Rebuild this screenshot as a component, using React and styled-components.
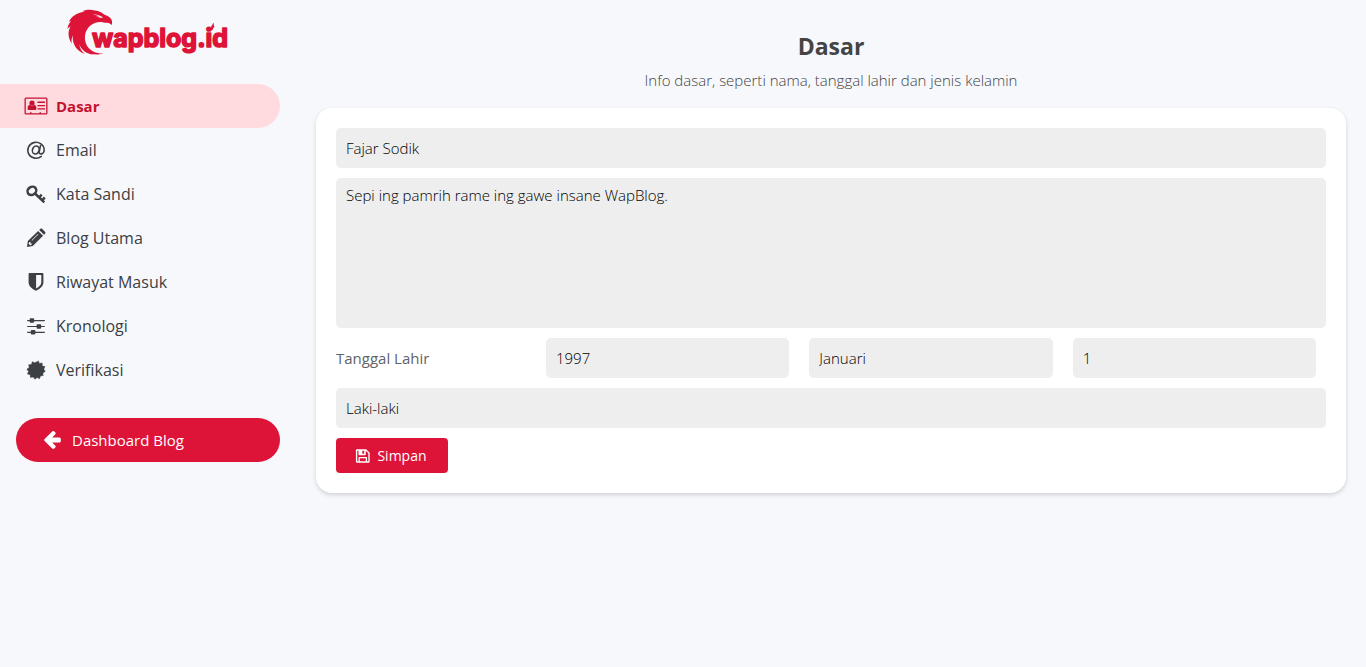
import React from "react";
import styled, { createGlobalStyle } from "styled-components";

const GlobalStyle = createGlobalStyle`
  *, *::before, *::after { box-sizing: border-box; }
  body {
    margin: 0;
    background: #f7f8fc;
    color: #3c4043;
    font-family: "Open Sans", "Noto Sans", sans-serif;
    font-size: 15px;
    line-height: 20px;
  }
`;

const Page = styled.div`
  display: flex;
  align-items: flex-start;
  min-height: 100vh;
`;

const Sidebar = styled.aside`
  flex: none;
  width: 296px;
  padding-right: 16px;
`;

const LogoLink = styled.a`
  display: flex;
  justify-content: center;
  height: 64px;
  margin-bottom: 20px;
  padding-left: 16px;

  text {
    font-family: Inter, sans-serif;
    font-size: 25px;
    font-weight: 700;
  }
`;

const Nav = styled.nav`
  display: flex;
  flex-direction: column;
`;

const NavLink = styled.a`
  display: flex;
  align-items: center;
  gap: 8px;
  height: 44px;
  padding-left: 24px;
  border-radius: 0 22px 22px 0;
  color: ${(p) => (p.$active ? "#c4122f" : "#3c4043")};
  background: ${(p) => (p.$active ? "#ffdbe0" : "transparent")};
  font-size: ${(p) => (p.$active ? 15 : 16)}px;
  font-weight: ${(p) => (p.$active ? 700 : 400)};
  text-decoration: none;
`;

const BackLink = styled(NavLink)`
  margin: 26px 0 0 16px;
  border-radius: 22px;
  background: #de1338;
  color: #fff;
  font-size: 15px;
`;

const Glyph = styled.svg`
  flex: none;
  width: ${(p) => p.$size || 24}px;
  height: ${(p) => p.$size || 24}px;
  fill: currentColor;
`;

const Main = styled.main`
  flex: 1;
  min-width: 0;
  padding: 32px 20px 20px;
`;

const Heading = styled.h1`
  margin: 0;
  color: #444;
  font-size: 23px;
  font-weight: 700;
  line-height: 28px;
  text-align: center;
`;

const Intro = styled.p`
  margin: 10px 0 18px;
  color: #444;
  font-size: 15px;
  font-weight: 300;
  text-align: center;
`;

const Card = styled.form`
  display: flex;
  flex-direction: column;
  align-items: stretch;
  gap: 10px;
  padding: 20px;
  border-radius: 16px;
  background: #fff;
  box-shadow: 0 2px 4px rgba(60, 64, 67, 0.2);
`;

const Field = styled.input`
  display: block;
  width: 100%;
  height: 40px;
  margin: 0;
  padding: 0 10px;
  border: 0;
  border-radius: 5px;
  outline: 0;
  appearance: none;
  background: #eee;
  color: #000;
  font-family: inherit;
  font-size: 15px;
  font-weight: 300;
`;

const Bio = styled(Field)`
  height: 150px;
  padding: 7px 10px;
  line-height: 20px;
  resize: none;
`;

const BirthRow = styled.div`
  display: grid;
  grid-template-columns: 190px 1fr 1fr 1fr;
  align-items: center;
  gap: 20px;
  padding-right: 10px;
`;

const Label = styled.label`
  color: #5f6368;
`;

const SaveButton = styled.button`
  display: flex;
  align-items: center;
  justify-content: center;
  gap: 4px;
  align-self: flex-start;
  width: 112px;
  height: 35px;
  padding: 0 4px 0 0;
  border: 0;
  border-radius: 4px;
  background: #de1338;
  color: #fff;
  font-family: inherit;
  font-size: 14px;
  line-height: 20px;
`;

const shapes = {
  card: (
    <>
      <path fillRule="evenodd" d="M2 3.500h20a1.500 1.500 0 0 1 1.500 1.500v14a1.500 1.500 0 0 1-1.500 1.500H2A1.500 1.500 0 0 1 .5 19V5A1.500 1.500 0 0 1 2 3.500zM1.800 4.800v14.400h4.200v-.9h1.500v.9h8v-.9H17v.9h5.200V4.800z" />
      <circle cx="8" cy="9" r="2.600" />
      <path d="M5.700 10.800c-1.500.2-2.100 1.800-2.100 3.700 0 1 .7 1.600 1.500 1.600h5.800c.9 0 1.500-.6 1.500-1.600 0-1.900-.6-3.500-2.100-3.700-1.300 1.200-3.300 1.200-4.600 0z" />
      <path d="M13.500 7.600H21V9h-7.500zM13.500 10.900H21v1.400h-7.500zM13.500 14.200H21v1.400h-7.500z" />
    </>
  ),
  at: (
    <g fill="none" stroke="currentColor" strokeWidth="1.600" strokeLinecap="round">
      <path d="M17.300 18.400A8.200 8 0 1 1 20.200 11.500c0 2.600-1.500 4.400-3.200 4.400-1.400 0-2-.9-1.700-2.400l1.100-5.600" />
      <ellipse cx="11.800" cy="12" rx="3.300" ry="4.100" transform="rotate(20 11.800 12)" />
    </g>
  ),
  key: (
    <g fill="none" stroke="currentColor">
      <ellipse cx="7.900" cy="8.800" rx="4.600" ry="3.900" strokeWidth="2.500" transform="rotate(-35 7.900 8.800)" />
      <path d="M11 11.500l9.300 8.800M15.200 15.300l2.500-2.600M18 18.300l2.800-2.800" strokeWidth="2.500" />
    </g>
  ),
  pencil: (
    <path fillRule="evenodd" d="M3.800 15 14.100 4.900l5 4.900-10.300 10.300-5.800.9zM15.200 3.900l1-.9c.6-.6 1.500-.6 2.100 0l2.700 2.700c.6.6.6 1.400 0 2l-1 1.100zM5.200 16.100l-.6 1.600 1.500 1.500 1.700-.6v-1.200H6.500v-1.300zM7.600 14.300l6.300-6.300.4.400-6.300 6.300z" />
  ),
  shield: (
    <path fillRule="evenodd" d="M5.700 3h12.600c.7 0 1.100.5 1.100 1.100v8.200c0 4-3.400 6.700-7.400 8.500-4-1.800-7.400-4.500-7.400-8.500V4.100C4.600 3.500 5 3 5.700 3zM12.100 5v13.400c2.800-1.600 5.200-3.400 5.200-6.200V5z" />
  ),
  sliders: (
    <path d="M3.200 6h2.500V5.200c0-.5.400-.9.900-.9h2.700c.5 0 .9.400.9.900V6h10.600v1.200H10.200v.6c0 .5-.4.900-.9.900H6.600a.9.900 0 0 1-.9-.9v-.6H3.200zM3.200 11.900h9.400v-.8c0-.5.400-.9.900-.9h2.800c.5 0 .9.400.9.900v.8h3.600v1.200h-3.600v.7c0 .5-.4.900-.9.900h-2.800a.9.900 0 0 1-.9-.9v-.7H3.200zM3.200 17.700h3.600v-.8c0-.5.400-.9.900-.9h2.800c.5 0 .9.400.9.900v.8h9.400v1.200h-9.400v.7c0 .5-.4.900-.9.900H7.700a.9.900 0 0 1-.9-.9v-.7H3.200z" />
  ),
  badge: (
    <path d="M12 4.300 14.400 2.900 15.400 5.400 18.200 5 18.200 7.900 21 8.600 19.800 11.100 21.200 13.400 18.800 14.900 19.200 17.600 16.400 17.900 15.600 20.700 13.100 19.500 10.900 21.200 9.300 19 6.500 19.400 6.200 16.700 3.400 15.900 4.600 13.400 2.900 11.200 5.200 9.500 4.700 6.700 7.500 6.500 8.200 3.700 10.600 4.800z" strokeLinejoin="round" stroke="currentColor" strokeWidth=".5" />
  ),
  arrow: (
    <path d="M20.800 11v2c0 .8-.5 1.500-1.400 1.500h-7.200l3 3c.7.700.7 1.500 0 2.100l-.9.900c-.6.600-1.500.6-2.100 0l-7.600-7.500c-.6-.6-.6-1.500 0-2.100l7.600-7.500c.6-.6 1.500-.6 2.100 0l.9.900c.6.600.6 1.500 0 2.100l-3 3h7.200c.9 0 1.400.8 1.400 1.600z" />
  ),
  save: (
    <path fillRule="evenodd" d="M4.500 4h11.300l4.200 4.200v10.800c0 .6-.4 1-1 1H4.500c-.6 0-1-.4-1-1V5c0-.6.400-1 1-1zM5.100 5.600v12.800h1.500v-4.300c0-.5.400-.9.900-.9h8.500c.5 0 .9.400.9.900v4.300h1.500V8.800L15.300 5.600v4.500c0 .5-.4.900-.9.900H7.500a.9.900 0 0 1-.9-.9V5.600zM8.200 14.800v3.600h7.100v-3.600zM11.200 5.600v3.700h2.200V5.600z" />
  ),
};

function Icon({ name, size }) {
  return (
    <Glyph $size={size} viewBox="0 0 24 24" aria-hidden="true">
      {shapes[name]}
    </Glyph>
  );
}

function Logo() {
  return (
    <svg width="164" height="64" viewBox="0 0 164 64" fill="#de1338" role="img" aria-label="wapblog.id">
      <path d="M3 21.500C5.500 16.500 10.500 13 18.500 11.800C17.500 11.200 16.500 11.200 15.500 11.400C19 9.600 25 9.400 29 10.500C33 11 36 12.500 38 14.500C43 16 47.500 19 45.800 25C44 23 42 22.600 39 22.700C31 20 22 24.500 19.500 33C17 42 22 51 31.500 53C33.500 53.500 35.500 53.500 37.500 53C34 54.800 29.500 54.800 25.500 53.800C26.500 54.400 27.500 54.800 29 55C20.500 54 15 50 13.200 44C13.800 48.500 16 52 19 54C10.500 51 5.800 43.500 6.800 35.500C5.500 38 5.300 41 5.800 43.500C2 38 1.500 31.500 4.500 26.500C3.300 27 2.200 28 1.500 29C1.800 25.500 3 23.500 5 21C4.500 21 3.800 21.200 3 21.500Z" />
      <path d="M26.500 14.200c3.500 0 7.500 1 10.700 3.300-3 .5-5.200.2-7-1.500 1.800.6 2.800.7 3.800.5-2.500-1.200-5-1.800-7.500-2.300z" fill="#f7f8fc" />
      <text x="26" y="47" stroke="#de1338" strokeWidth="1.500" strokeLinejoin="round">wapblog.id</text>
      <path d="M142 30c2-1 4-2 3-4 3-1 0-2 3-3-1 3 2 4-1 5 1 2-2 3-5 2z" />
    </svg>
  );
}

const links = [
  ["card", "Dasar"],
  ["at", "Email"],
  ["key", "Kata Sandi"],
  ["pencil", "Blog Utama"],
  ["shield", "Riwayat Masuk"],
  ["sliders", "Kronologi"],
  ["badge", "Verifikasi"],
];

export default function App() {
  return (
    <>
      <GlobalStyle />
      <Page>
        <Sidebar>
          <LogoLink href="#"><Logo /></LogoLink>
          <Nav>
            {links.map(([icon, label], i) => (
              <NavLink key={label} href="#" $active={i === 0}>
                <Icon name={icon} />
                {label}
              </NavLink>
            ))}
            <BackLink href="#">
              <Icon name="arrow" />
              Dashboard Blog
            </BackLink>
          </Nav>
        </Sidebar>
        <Main>
          <Heading>Dasar</Heading>
          <Intro>Info dasar, seperti nama, tanggal lahir dan jenis kelamin</Intro>
          <Card onSubmit={(e) => e.preventDefault()}>
            <Field type="text" aria-label="Nama" defaultValue="Fajar Sodik" />
            <Bio as="textarea" aria-label="Bio" defaultValue="Sepi ing pamrih rame ing gawe insane WapBlog." />
            <BirthRow>
              <Label htmlFor="year">Tanggal Lahir</Label>
              <Field as="select" id="year"><option>1997</option></Field>
              <Field as="select" aria-label="Bulan"><option>Januari</option></Field>
              <Field as="select" aria-label="Tanggal"><option>1</option></Field>
            </BirthRow>
            <Field as="select" aria-label="Jenis kelamin"><option>Laki-laki</option></Field>
            <SaveButton type="submit">
              <Icon name="save" size={20} />
              Simpan
            </SaveButton>
          </Card>
        </Main>
      </Page>
    </>
  );
}
